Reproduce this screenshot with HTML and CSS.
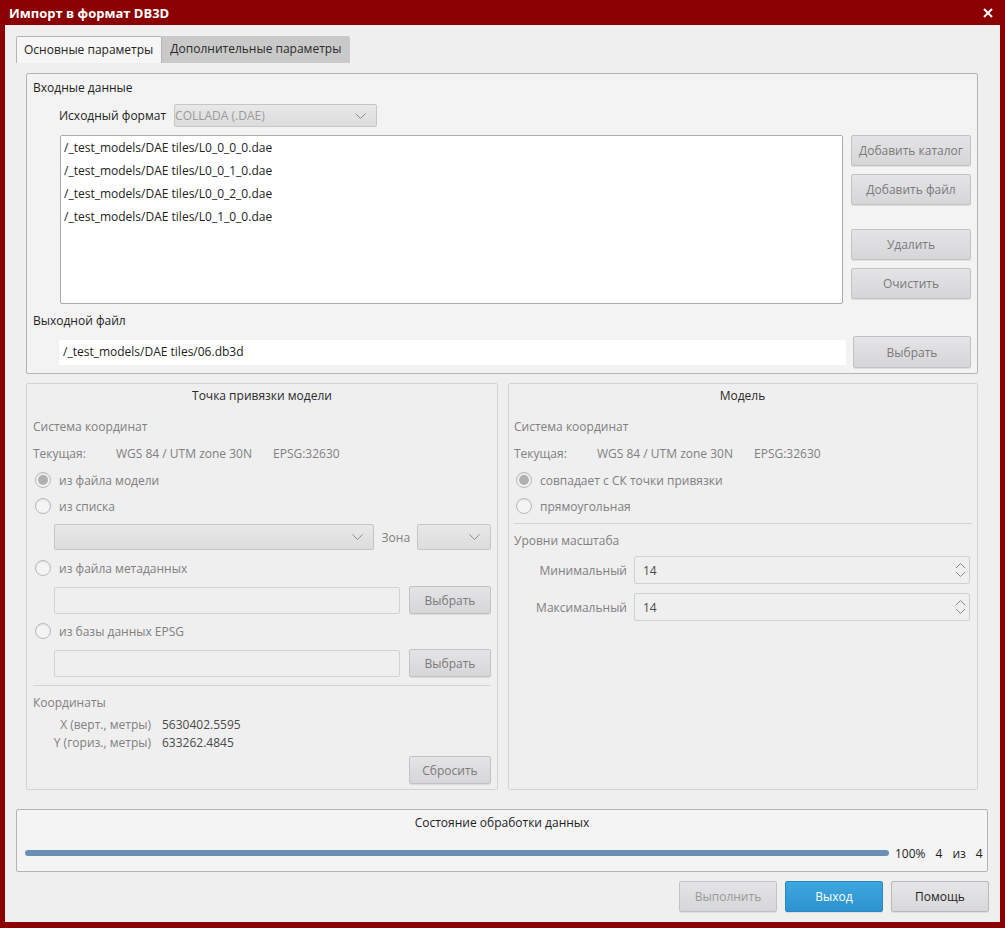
FILE: index.html
```html
<!DOCTYPE html>
<html lang="ru">
<head>
<meta charset="utf-8">
<title>Импорт в формат DB3D</title>
<link rel="stylesheet" href="styles.css">
</head>
<body>
<div class="window">
  <div class="titlebar">
    <span class="title">Импорт в формат DB3D</span>
    <svg class="close" width="10" height="10" viewBox="0 0 10 10"><path d="M1 1L9 9M9 1L1 9" stroke="#fff" stroke-width="2"/></svg>
  </div>
  <div class="content">
    <div class="tabs">
      <div class="tab active">Основные параметры</div>
      <div class="tab">Дополнительные параметры</div>
    </div>
    <div class="pane">
      <div class="group input-group">
        <div class="line">Входные данные</div>
        <div class="format-row">
          <span class="line">Исходный формат</span>
          <div class="combo format-combo"><span class="combo-text">COLLADA (.DAE)</span><svg class="chev" width="11" height="6" viewBox="0 0 11 6"><path d="M0.5 0.5L5.5 5.5L10.5 0.5" fill="none" stroke="#8a8a8a"/></svg></div>
        </div>
        <div class="list-row">
          <div class="filelist">
            <div class="item">/_test_models/DAE tiles/L0_0_0_0.dae</div>
            <div class="item">/_test_models/DAE tiles/L0_0_1_0.dae</div>
            <div class="item">/_test_models/DAE tiles/L0_0_2_0.dae</div>
            <div class="item">/_test_models/DAE tiles/L0_1_0_0.dae</div>
          </div>
          <div class="list-buttons">
            <div class="btn tall">Добавить каталог</div>
            <div class="btn tall">Добавить файл</div>
            <div class="btn tall spaced">Удалить</div>
            <div class="btn tall">Очистить</div>
          </div>
        </div>
        <div class="line out-label">Выходной файл</div>
        <div class="out-row">
          <div class="out-field">/_test_models/DAE tiles/06.db3d</div>
          <div class="btn out-btn">Выбрать</div>
        </div>
      </div>

      <div class="lower">
        <div class="group sub left-group">
          <div class="line gtitle">Точка привязки модели</div>
          <div class="line dim m13">Система координат</div>
          <div class="line dim cur m9"><span class="c1">Текущая:</span><span class="c2">WGS 84 / UTM zone 30N</span><span>EPSG:32630</span></div>
          <div class="radio m8"><span class="rb checked"></span><span class="dim">из файла модели</span></div>
          <div class="radio m8"><span class="rb"></span><span class="dim">из списка</span></div>
          <div class="combo-row m9">
            <div class="combo list-combo"><span class="combo-text"></span><svg class="chev" width="11" height="6" viewBox="0 0 11 6"><path d="M0.5 0.5L5.5 5.5L10.5 0.5" fill="none" stroke="#8a8a8a"/></svg></div>
            <span class="dim zone">Зона</span>
            <div class="combo zone-combo"><span class="combo-text"></span><svg class="chev" width="11" height="6" viewBox="0 0 11 6"><path d="M0.5 0.5L5.5 5.5L10.5 0.5" fill="none" stroke="#8a8a8a"/></svg></div>
          </div>
          <div class="radio m9"><span class="rb"></span><span class="dim">из файла метаданных</span></div>
          <div class="edit-row m9">
            <div class="edit"></div>
            <div class="btn small">Выбрать</div>
          </div>
          <div class="radio m8"><span class="rb"></span><span class="dim">из базы данных EPSG</span></div>
          <div class="edit-row m9">
            <div class="edit"></div>
            <div class="btn small">Выбрать</div>
          </div>
          <div class="sep m8"></div>
          <div class="line dim m8">Координаты</div>
          <div class="coords m4">
            <span class="dim lbl">X (верт., метры)</span><span class="val">5630402.5595</span>
            <span class="dim lbl">Y (гориз., метры)</span><span class="val">633262.4845</span>
          </div>
          <div class="reset-row m4"><div class="btn small">Сбросить</div></div>
        </div>

        <div class="group sub right-group">
          <div class="line gtitle">Модель</div>
          <div class="line dim m13">Система координат</div>
          <div class="line dim cur m9"><span class="c1">Текущая:</span><span class="c2">WGS 84 / UTM zone 30N</span><span>EPSG:32630</span></div>
          <div class="radio m8"><span class="rb checked"></span><span class="dim">совпадает с СК точки привязки</span></div>
          <div class="radio m8"><span class="rb"></span><span class="dim">прямоугольная</span></div>
          <div class="sep m8 wide"></div>
          <div class="line dim m8">Уровни масштаба</div>
          <div class="spin-row m6">
            <span class="dim spin-lbl">Минимальный</span>
            <div class="spin"><span class="val">14</span><svg class="arrows" width="11" height="16" viewBox="0 0 11 16"><path d="M1 6L5.5 1.5L10 6M1 10L5.5 14.5L10 10" fill="none" stroke="#8a8a8a"/></svg></div>
          </div>
          <div class="spin-row m9">
            <span class="dim spin-lbl">Максимальный</span>
            <div class="spin"><span class="val">14</span><svg class="arrows" width="11" height="16" viewBox="0 0 11 16"><path d="M1 6L5.5 1.5L10 6M1 10L5.5 14.5L10 10" fill="none" stroke="#8a8a8a"/></svg></div>
          </div>
        </div>
      </div>
    </div>

    <div class="group progress-group">
      <div class="line gtitle dark">Состояние обработки данных</div>
      <div class="progress-row">
        <div class="bar"></div>
        <span class="pct">100%</span><span class="cnt">4</span><span class="cnt">из</span><span class="cnt last">4</span>
      </div>
    </div>

    <div class="actions">
      <div class="btn action disabled">Выполнить</div>
      <div class="btn action primary">Выход</div>
      <div class="btn action normal">Помощь</div>
    </div>
  </div>
</div>
</body>
</html>
```
FILE: styles.css
```css
* { box-sizing: border-box; }
body { margin: 0; font-family: "Open Sans", "Noto Sans", sans-serif; font-size: 12px; color: #232323; }
.window { width: 1005px; height: 928px; background: #8b0000; padding: 0 5px 6px 5px; display: flex; flex-direction: column; }
.titlebar { height: 25px; flex: none; display: flex; align-items: center; justify-content: space-between; padding: 0 7px 0 4px; color: #fff; }
.title { font-weight: bold; font-size: 13px; }
.content { flex: 1; background: #efefef; padding: 11px 12px 10px 11px; display: flex; flex-direction: column; }
.tabs { display: flex; height: 27px; }
.tab { height: 27px; line-height: 26px; padding: 0 9px 0 8px; background: #c9c9c9; color: #2a2a2a; border-top-right-radius: 2px; }
.tab.active { background: #f6f6f6; border: 1px solid #b4b4b4; border-bottom: none; border-radius: 2px 2px 0 0; color: #232323; padding: 0 8px 0 7px; }
.pane { padding: 10px 10px 10px 10px; display: flex; flex-direction: column; gap: 9px; }
.line { height: 18px; line-height: 18px; white-space: nowrap; }
.group { border: 1px solid #b4b4b4; border-radius: 2px; }
.input-group { background: #f3f3f3; height: 301px; padding: 5px 6px 5px 6px; display: flex; flex-direction: column; }
.format-row { margin-top: 7px; padding-left: 26px; display: flex; align-items: center; gap: 8px; height: 23px; }
.combo { height: 23px; border: 1px solid #c6c6c6; border-radius: 2px; background: linear-gradient(#e8e8e8, #dcdcdc); display: flex; align-items: center; justify-content: space-between; padding: 0 10px 0 0; color: #9a9a9a; }
.format-combo { width: 203px; }
.list-row { margin-top: 8px; display: flex; gap: 8px; }
.filelist { margin-left: 27px; width: 783px; height: 169px; background: #fff; border: 1px solid #ababab; border-radius: 2px; padding: 3px 3px; }
.item { height: 23px; line-height: 17px; white-space: nowrap; }
.list-buttons { width: 120px; display: flex; flex-direction: column; gap: 8px; }
.btn { display: flex; align-items: center; justify-content: center; border: 1px solid #c2c2c2; border-radius: 2px; background: linear-gradient(#e4e4e6, #d6d6d8); color: #7a7a7a; white-space: nowrap; box-shadow: 0 1px 0 rgba(0,0,0,0.08); }
.btn.tall { height: 31px; }
.btn.spaced { margin-top: 16px; }
.out-label { margin-top: 8px; }
.out-row { margin-top: 6px; height: 32px; display: flex; align-items: center; }
.out-field { margin-left: 26px; width: 787px; height: 25px; background: #fff; line-height: 24px; padding-left: 4px; }
.out-btn { margin-left: 7px; width: 118px; height: 32px; }
.lower { display: flex; gap: 10px; height: 407px; }
.sub { border-color: #d3d3d3; background: #efefef; padding: 3px 6px 0 6px; display: flex; flex-direction: column; }
.left-group { width: 472px; }
.right-group { width: 470px; padding-left: 5px; }
.gtitle { text-align: center; color: #2a2a2a; }
.dim { color: #808080; }
.m4 { margin-top: 4px; } .m6 { margin-top: 6px; } .m8 { margin-top: 8px; } .m9 { margin-top: 9px; } .m13 { margin-top: 13px; }
.cur { display: flex; }
.c1 { width: 83px; }
.c2 { width: 157px; }
.radio { height: 18px; display: flex; align-items: center; gap: 8px; padding-left: 2px; white-space: nowrap; }
.rb { width: 16px; height: 16px; border-radius: 50%; border: 1px solid #b8b8b8; background: #f4f4f4; box-shadow: inset 0 1px 1px rgba(0,0,0,0.08); display: flex; align-items: center; justify-content: center; }
.rb.checked::after { content: ""; width: 10px; height: 10px; border-radius: 50%; background: #b0b0b0; }
.combo-row { height: 26px; display: flex; align-items: center; padding-left: 21px; }
.combo-row .combo { height: 26px; }
.list-combo { width: 320px; }
.zone { margin: 0 7px 0 8px; }
.zone-combo { width: 74px; }
.edit-row { height: 28px; display: flex; align-items: center; padding-left: 21px; gap: 9px; }
.edit { width: 346px; height: 27px; border: 1px solid #d2d2d2; border-radius: 2px; background: #efefef; }
.btn.small { width: 82px; height: 28px; }
.sep { height: 1px; background: #d3d3d3; }
.sep.wide { margin-right: -1px; }
.coords { display: grid; grid-template-columns: 118px auto; column-gap: 11px; row-gap: 0; }
.coords span { height: 18px; line-height: 18px; white-space: nowrap; }
.coords .lbl { text-align: right; }
.val { color: #4a4a4a; }
.reset-row { display: flex; justify-content: flex-end; }
.spin-row { height: 28px; display: flex; align-items: center; gap: 7px; }
.spin-lbl { width: 113px; text-align: right; white-space: nowrap; }
.spin { width: 336px; height: 28px; border: 1px solid #d0d0d0; border-radius: 2px; background: #efefef; display: flex; align-items: center; justify-content: space-between; padding: 0 3px 0 8px; }
.progress-group { margin-top: 9px; height: 63px; background: #f4f4f4; padding: 4px 8px 0 8px; }
.dark { color: #1e1e1e; }
.progress-row { margin-top: 12px; height: 18px; display: flex; align-items: center; white-space: nowrap; color: #1e1e1e; }
.bar { flex: none; width: 864px; height: 6px; background: #6a8fb4; border-radius: 3px; margin-right: 6px; }
.pct { margin-right: 10px; }
.cnt { margin-right: 10px; }
.cnt.last { margin-right: 0; }
.actions { margin-top: 9px; display: flex; justify-content: flex-end; gap: 8px; margin-right: -1px; }
.btn.action { width: 98px; height: 31px; }
.btn.disabled { color: #9a9a9a; }
.btn.primary { background: linear-gradient(#3ea6df, #2d93cf); border-color: #2a86c0; color: #fff; }
.btn.normal { color: #1e1e1e; background: linear-gradient(#e6e6e8, #d8d8da); border-color: #b8b8b8; }
```
